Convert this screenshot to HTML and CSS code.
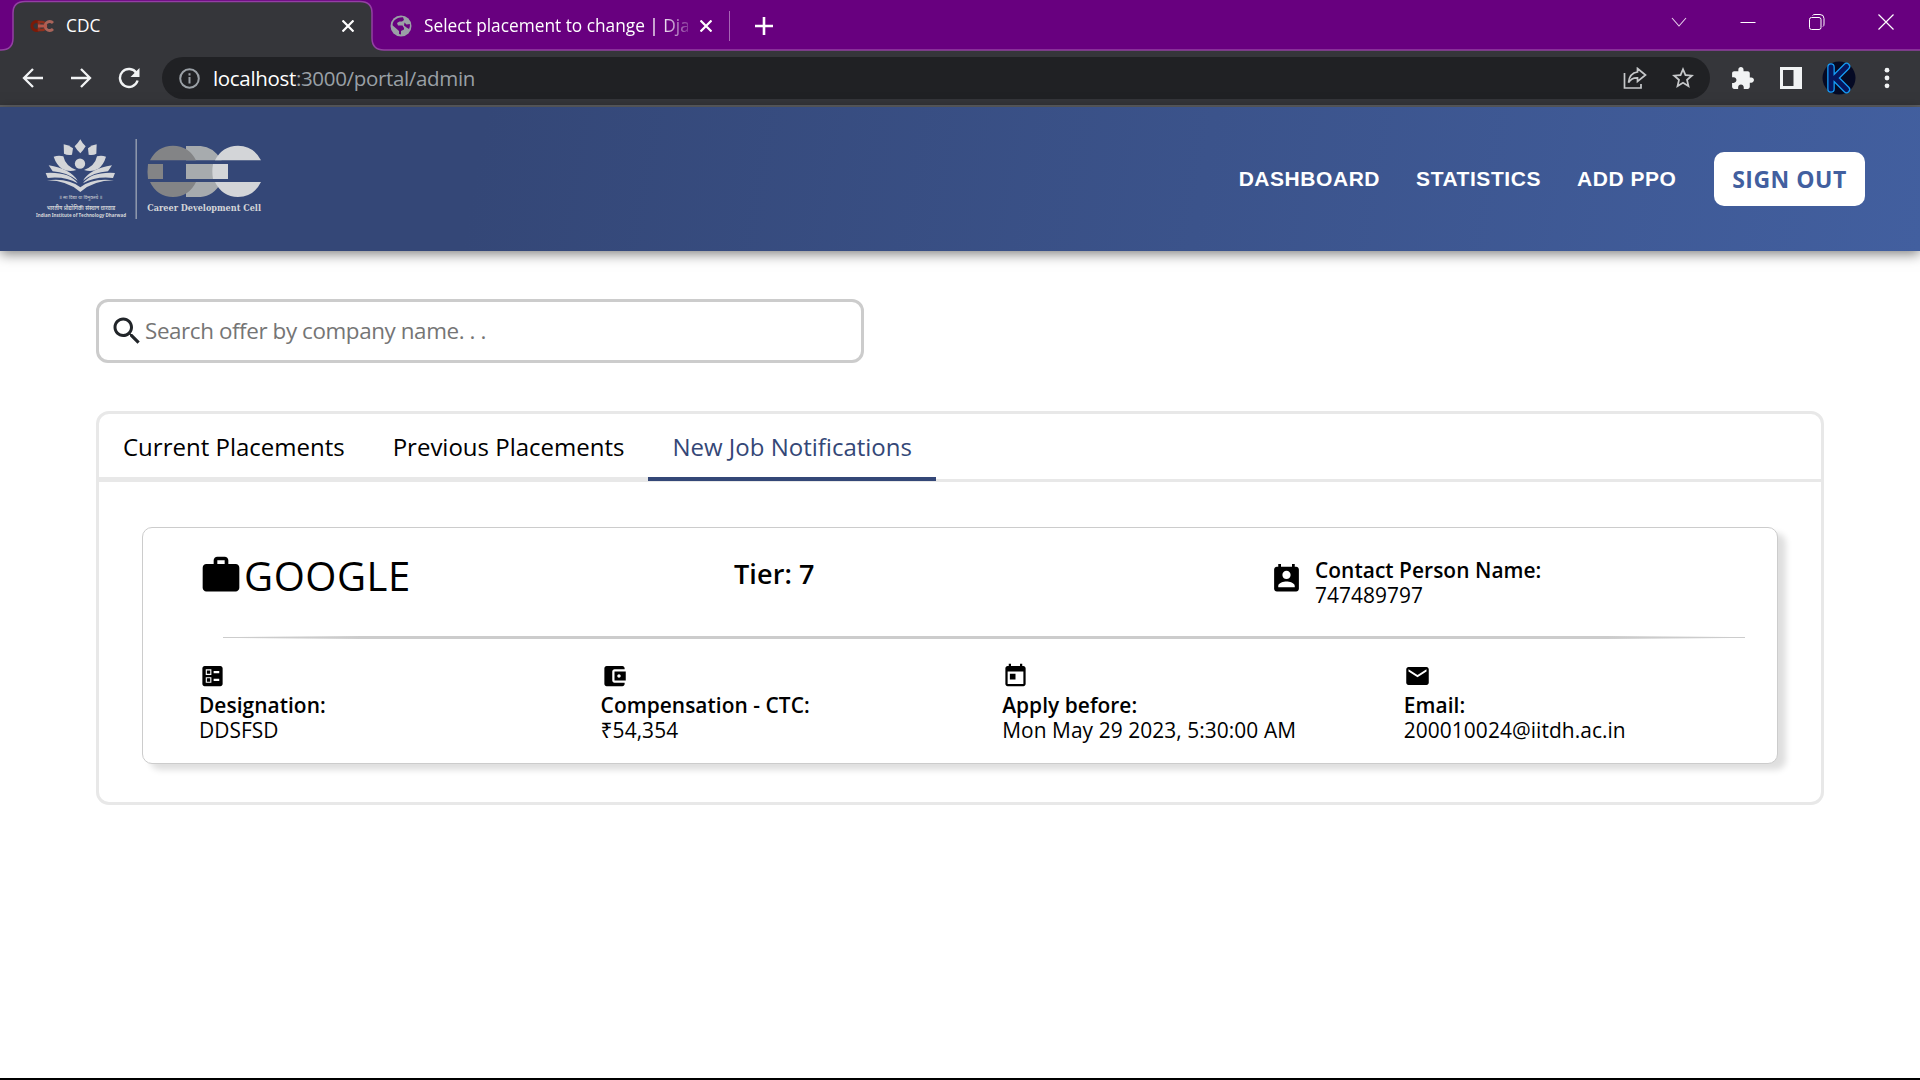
FILE: index.html
```html
<!DOCTYPE html>
<html lang="en">
<head>
<meta charset="utf-8">
<title>CDC</title>
<link rel="stylesheet" href="styles.css">
</head>
<body>
<div class="browser">
  <div class="tabstrip">
    <svg class="tab-shape" width="1920" height="51" viewBox="0 0 1920 51">
      <path d="M0 51V50H1Q13 50 13 38V13Q13 1.500 25 1.500H360Q372 1.500 372 13V38Q372 50 384 50H1920V51Z" fill="#35363a"/>
      <path d="M0 50H1Q13 50 13 38V13Q13 1.500 25 1.500H360Q372 1.500 372 13V38Q372 50 384 50H1920" fill="none" stroke="#9340a3" stroke-width="1.500"/>
    </svg>
    <div class="tab tab-active">
      <svg class="favicon" width="24" height="12" viewBox="0 0 24 12">
        <path d="M9 2.300A4.500 4.500 0 1 0 9 9.700" fill="none" stroke="#7a1a08" stroke-width="3"/>
        <path d="M9 2h3a4 4 0 0 1 0 8H9z" fill="none" stroke="#8f2f1c" stroke-width="2.600"/>
        <path d="M23 3A4.500 4.500 0 1 0 23 9" fill="none" stroke="#a9645a" stroke-width="2.800"/>
        <path d="M8 4.500h9v3H8z" fill="#b5574a"/>
      </svg>
      <span class="tab-title">CDC</span>
      <svg class="x" width="12" height="12" viewBox="0 0 12 12"><path d="M.5 .5l11 11M11.500 .5l-11 11" stroke="#fff" stroke-width="2.200"/></svg>
    </div>
    <div class="tab tab-other">
      <svg width="22" height="22" viewBox="0 0 22 22"><circle cx="11" cy="11" r="10.500" fill="#9aa0a6"/><path d="M13 2.300L14 5l-2 1.500H9.500L7 8l1 2.500h4.500l1.500 2.500v1.500l-3 1.500v3.500l-2-.5v-3l-2.500-2.200-3.800-3.300C2 7 6 2 13 2.300zM14.500 7.500l2 2 3.300-.5c.3 2 0 3.500-.8 5l-2.500-1.500-2.500-2z" fill="#68007f"/></svg>
      <span class="tab-title fade">Select placement to change | Dja</span>
      <svg class="x" width="12" height="12" viewBox="0 0 12 12"><path d="M.5 .5l11 11M11.500 .5l-11 11" stroke="#fff" stroke-width="2.200"/></svg>
    </div>
    <span class="tab-sep"></span>
    <svg class="plus" width="18" height="18" viewBox="0 0 18 18"><path d="M9 0v18M0 9h18" stroke="#fff" stroke-width="2.600"/></svg>
    <div class="window-buttons">
      <svg width="16" height="16" viewBox="0 0 16 16"><path d="M1 4l7 8 7-8" fill="none" stroke="#e6cfea" stroke-width="1.100"/></svg>
      <svg width="16" height="16" viewBox="0 0 16 16"><path d="M.5 8.500h15" stroke="#fff"/></svg>
      <svg width="16" height="16" viewBox="0 0 16 16"><g fill="none" stroke="#fff"><rect x=".5" y="3.500" width="11.500" height="12" rx="2"/><path d="M3.500 1.500Q4 .5 6 .5H11Q15 .5 15 4.500V10Q15 12 14 12.500"/></g></svg>
      <svg width="16" height="16" viewBox="0 0 16 16"><path d="M.5 .5l15 15M15.500 .5l-15 15" stroke="#fff" stroke-width="1.200"/></svg>
    </div>
  </div>

  <div class="toolbar">
    <svg class="nav-icon" width="22" height="22" viewBox="0 0 22 22"><path d="M21 11H2.500M11 2L2 11l9 9" fill="none" stroke="#f1f3f4" stroke-width="2.300"/></svg>
    <svg class="nav-icon" width="22" height="22" viewBox="0 0 22 22"><path d="M1 11h18.500M11 2l9 9-9 9" fill="none" stroke="#f1f3f4" stroke-width="2.300"/></svg>
    <svg class="nav-icon" width="22" height="22" viewBox="0 0 22 22"><path d="M18.500 6A9 9 0 1 0 19.600 13.500" fill="none" stroke="#f1f3f4" stroke-width="2.400"/><path d="M21.500 1v9h-9z" fill="#f1f3f4"/></svg>
    <div class="address">
      <svg width="21" height="21" viewBox="0 0 21 21"><circle cx="10.500" cy="10.500" r="9.300" fill="none" stroke="#9aa0a6" stroke-width="2"/><path d="M10.500 9v6.500M10.500 5.300v2.200" stroke="#9aa0a6" stroke-width="2"/></svg>
      <span class="url"><b>localhost</b>:3000/portal/admin</span>
      <svg class="share" width="24" height="22" viewBox="0 0 24 22"><path d="M1.500 6v15H18v-4M14.500 1.500L22.500 8l-8 6.500V10.800Q8.500 10.500 5.500 15.500 6.500 6 14.500 5z" fill="none" stroke="#c6c8ca" stroke-width="1.700"/></svg>
      <svg width="22" height="22" viewBox="2 2 20 20"><path d="M22 9.240l-7.190-.62L12 2 9.190 8.630 2 9.240l5.460 4.730L5.820 21 12 17.270 18.180 21l-1.630-7.030L22 9.240zM12 15.400l-3.760 2.270 1-4.280-3.320-2.880 4.380-.38L12 6.100l1.710 4.040 4.380.38-3.320 2.880 1 4.280L12 15.400z" fill="#c6c8ca"/></svg>
    </div>
    <svg class="puzzle" width="25" height="25" viewBox="0 0 24 24"><path d="M20.500 11H19V7c0-1.100-.9-2-2-2h-4V3.500C13 2.120 11.880 1 10.500 1S8 2.120 8 3.500V5H4c-1.100 0-1.990.9-1.990 2v3.800H3.500c1.490 0 2.700 1.210 2.700 2.700s-1.210 2.700-2.700 2.700H2V20c0 1.100.9 2 2 2h3.800v-1.500c0-1.490 1.210-2.700 2.700-2.700 1.490 0 2.700 1.210 2.700 2.700V22H17c1.100 0 2-.9 2-2v-4h1.500c1.380 0 2.500-1.120 2.500-2.500S21.880 11 20.500 11z" fill="#f1f3f4"/></svg>
    <svg class="sidepanel" width="22" height="22" viewBox="0 0 22 22"><path d="M0 0h22v22H0zM3 3v16h10.500V3z" fill="#f1f3f4" fill-rule="evenodd"/></svg>
    <svg class="avatar" width="34" height="34" viewBox="0 0 34 34"><circle cx="17" cy="17" r="16.500" fill="#050a24"/><g fill="none" stroke-linecap="round" stroke-linejoin="round"><path d="M9 6v22M24.500 5.500L13 17l11.500 11.500" stroke="#159cf5" stroke-width="7.600"/><path d="M9 6v22M24.500 5.500L13 17l11.500 11.500" stroke="#06165e" stroke-width="5"/></g></svg>
    <svg class="kebab" width="6" height="22" viewBox="0 0 6 22"><g fill="#f1f3f4"><circle cx="3" cy="3.200" r="2.400"/><circle cx="3" cy="11" r="2.400"/><circle cx="3" cy="18.800" r="2.400"/></g></svg>
  </div>
</div>

<header class="header">
  <svg class="logo" width="250" height="100" viewBox="0 27 750 300">
    <g fill="#d3d5d8">
      <path d="M181 58Q172 72 164 79Q171 91 181 100Q190 91 197 79Q188 72 181 58z"/>
      <path d="M131 73Q146 75 159 85L156 104Q143 107 132 101z"/>
      <path d="M230 73Q215 75 204 85L206 104Q220 107 229 101z"/>
      <circle cx="180" cy="131" r="15.500"/>
      <path d="M101 110Q116 105 130 109Q136 138 169 150Q145 157 126 146Q109 134 101 110z"/>
      <path d="M258 110Q244 105 231 109Q225 138 192 150Q216 157 235 146Q251 134 258 110z"/>
      <path d="M86 136Q150 146 173 182Q140 157 98 154Z"/>
      <path d="M276 136Q211 146 189 182Q221 157 264 154Z"/>
      <path d="M77 159Q148 155 173 190Q135 168 83 174Z"/>
      <path d="M285 159Q214 155 189 190Q227 168 279 174Z"/>
      <path d="M81 181Q145 173 181 202Q216 173 282 181Q218 182 181 216Q143 182 81 181z"/>
    </g>
    <g fill="#d3d5d8" font-family="'Noto Sans', 'Noto Sans Devanagari', 'Open Sans', sans-serif">
      <text x="117" y="238" font-size="16" textLength="130" lengthAdjust="spacingAndGlyphs">॥ सा विद्या या विमुक्तये ॥</text>
      <text x="80" y="271" font-size="18" font-weight="600" textLength="206" lengthAdjust="spacingAndGlyphs">भारतीय प्रौद्योगिकी संस्थान धारवाड</text>
      <text x="48" y="292" font-size="13.500" font-weight="700" textLength="270" lengthAdjust="spacingAndGlyphs">Indian Institute of Technology Dharwad</text>
    </g>
    <path d="M348.500 57V297" stroke="#aab0bd" stroke-width="3.500"/>
    <path d="M498 78H542Q580 80 605 121H498zM498 132H580V177H498zM498 186H605Q580 229 542 231H498z" fill="#a7abae"/>
    <path d="M390 121Q411 78 459 77Q507 78 528 121zM384 132H429V177H384Q381 155 384 132zM390 186H528Q507 230 459 231Q411 230 390 186z" fill="#838486"/>
    <path d="M585 121Q606 78 654 77Q702 78 723 121zM579 132H624V177H579Q575 155 579 132zM585 186H723Q702 230 654 231Q606 230 585 186z" fill="#d3d5d8"/>
    <text x="382" y="274" font-family="'DejaVu Serif', serif" font-size="26" font-weight="700" fill="#d3d5d8" textLength="341" lengthAdjust="spacingAndGlyphs">Career Development Cell</text>
  </svg>
  <nav class="nav">
    <a>DASHBOARD</a>
    <a>STATISTICS</a>
    <a>ADD PPO</a>
    <button class="signout">SIGN OUT</button>
  </nav>
</header>

<main class="main">
  <div class="search">
    <svg width="36" height="36" viewBox="0 0 24 24"><path fill="#212529" d="M15.500 14h-.79l-.28-.27C15.410 12.590 16 11.110 16 9.500 16 5.910 13.090 3 9.500 3S3 5.910 3 9.500 5.910 16 9.500 16c1.610 0 3.090-.59 4.230-1.570l.27.28v.79l5 4.990L20.490 19l-4.990-5zm-6 0C7.010 14 5 11.990 5 9.500S7.010 5 9.500 5 14 7.010 14 9.500 11.990 14 9.500 14z"/></svg>
    <span>Search offer by company name. . .</span>
  </div>

  <section class="panel">
    <div class="tabs">
      <div class="tabs-item">Current Placements</div>
      <div class="tabs-item">Previous Placements</div>
      <div class="tabs-item selected">New Job Notifications</div>
    </div>
    <article class="card">
      <div class="card-top">
        <div class="company">
          <svg width="44" height="44" viewBox="0 0 24 24"><path d="M20 6h-4V4c0-1.110-.89-2-2-2h-4c-1.110 0-2 .89-2 2v2H4c-1.110 0-1.990.89-1.990 2L2 19c0 1.110.89 2 2 2h16c1.110 0 2-.89 2-2V8c0-1.110-.89-2-2-2zm-6 0h-4V4h4v2z"/></svg>
          <span>GOOGLE</span>
        </div>
        <div class="tier">Tier: 7</div>
        <div class="contact">
          <svg width="33" height="34" viewBox="0 0 24 24"><path d="M19 3h-1V1h-2v2H8V1H6v2H5c-1.110 0-2 .9-2 2v14c0 1.100.89 2 2 2h14c1.100 0 2-.9 2-2V5c0-1.100-.9-2-2-2zm-7 3c1.660 0 3 1.340 3 3s-1.340 3-3 3-3-1.340-3-3 1.340-3 3-3zm6 12H6v-1c0-2 4-3.100 6-3.100s6 1.100 6 3.100v1z"/></svg>
          <div class="contact-text"><div class="label">Contact Person Name:</div><div class="value">747489797</div></div>
        </div>
      </div>
      <div class="rule"></div>
      <div class="facts">
        <div class="fact">
          <svg width="27" height="28" viewBox="0 0 24 24"><path d="M13 9.500h5v-2h-5v2zm0 7h5v-2h-5v2zm6 4.500H5c-1.100 0-2-.9-2-2V5c0-1.100.9-2 2-2h14c1.100 0 2 .9 2 2v14c0 1.100-.9 2-2 2zM6 11h5V6H6v5zm1-4h3v3H7V7zM6 18h5v-5H6v5zm1-4h3v3H7v-3z"/></svg>
          <div class="label">Designation:</div><div class="value">DDSFSD</div>
        </div>
        <div class="fact">
          <svg width="27" height="28" viewBox="0 0 24 24"><path d="M21 18v1c0 1.100-.9 2-2 2H5c-1.110 0-2-.9-2-2V5c0-1.100.89-2 2-2h14c1.100 0 2 .9 2 2v1h-9c-1.110 0-2 .9-2 2v8c0 1.100.89 2 2 2h9zm-9-2h10V8H12v8zm4-2.500c-.83 0-1.500-.67-1.500-1.500s.67-1.500 1.500-1.500 1.500.67 1.500 1.500-.67 1.500-1.500 1.500z"/></svg>
          <div class="label">Compensation - CTC:</div><div class="value">₹54,354</div>
        </div>
        <div class="fact">
          <svg width="27" height="28" viewBox="0 0 24 24"><path d="M19 3h-1V1h-2v2H8V1H6v2H5c-1.110 0-1.990.9-1.990 2L3 19c0 1.100.89 2 2 2h14c1.100 0 2-.9 2-2V5c0-1.100-.9-2-2-2zm0 16H5V8h14v11zM7 10h5v5H7z"/></svg>
          <div class="label">Apply before:</div><div class="value">Mon May 29 2023, 5:30:00 AM</div>
        </div>
        <div class="fact">
          <svg width="27" height="28" viewBox="0 0 24 24"><path d="M20 4H4c-1.100 0-1.990.9-1.990 2L2 18c0 1.100.9 2 2 2h16c1.100 0 2-.9 2-2V6c0-1.100-.9-2-2-2zm0 4l-8 5-8-5V6l8 5 8-5v2z"/></svg>
          <div class="label">Email:</div><div class="value">200010024@iitdh.ac.in</div>
        </div>
      </div>
    </article>
  </section>
</main>
</body>
</html>
```
FILE: styles.css
```css
* { box-sizing: border-box; }
body {
  margin: 0;
  height: 1080px;
  overflow: hidden;
  display: flex;
  flex-direction: column;
  background: #fff;
  border-bottom: 2px solid #000;
  font-family: "Open Sans", "Noto Sans", sans-serif;
  color: #000;
}
svg { display: block; flex: none; }

/* Browser window */
.tabstrip {
  position: relative;
  display: flex;
  align-items: center;
  height: 51px;
  background: #68007f;
}
.tab-shape { position: absolute; left: 0; top: 0; }
.tab { position: relative; display: flex; align-items: center; height: 51px; color: #fff; }
.tab-active { width: 372px; padding: 0 18px 0 30px; gap: 12px; }
.tab-other { width: 341px; padding-left: 18px; gap: 12px; }
.tab-title { flex: 1; font-size: 17.3px; line-height: 24px; white-space: nowrap; }
.fade {
  flex: none;
  width: 264px;
  -webkit-mask-image: linear-gradient(to right, #000 236px, transparent 272px);
  mask-image: linear-gradient(to right, #000 236px, transparent 272px);
}
.tab-sep { position: relative; width: 1px; height: 30px; margin-left: 16px; background: #a866b5; }
.plus { position: relative; margin-left: 24.500px; }
.window-buttons { position: relative; display: flex; gap: 52.700px; margin-left: auto; margin-right: 26.500px; padding-bottom: 8px; }

.toolbar {
  display: flex;
  align-items: center;
  height: 56px;
  padding: 0 30px 0 22px;
  background: #35363a;
  border-bottom: 2px solid #5f6063;
}
.nav-icon { margin-right: 26px; }
.address {
  display: flex;
  align-items: center;
  width: 1548px;
  height: 42px;
  margin-left: -4px;
  padding: 0 16px 0 17px;
  border-radius: 21px;
  background: #202124;
}
.url { margin-left: 13px; font-size: 20.500px; letter-spacing: -0.33px; line-height: 28px; color: #9aa0a6; }
.url b { font-weight: 400; color: #fff; }
.share { margin-left: auto; margin-right: 25px; }
.puzzle { margin-left: 20px; }
.sidepanel { margin-left: 25px; }
.avatar { margin-left: 20px; }
.kebab { margin-left: 28px; }

/* Page header */
.header {
  position: relative;
  display: flex;
  align-items: center;
  justify-content: space-between;
  height: 144px;
  flex: none;
  padding: 0 55px 0 20px;
  background: linear-gradient(100deg, #344777 25%, #425f9f 100%);
  box-shadow: 0 3px 12px rgba(0, 0, 0, 0.5);
}
.nav { display: flex; align-items: center; gap: 36px; }
.nav a {
  padding-bottom: 1px;
  font: 700 21px "Liberation Sans", Arial, sans-serif;
  letter-spacing: 0.55px;
  color: #fff;
}
.signout {
  width: 151px;
  height: 54px;
  margin-left: 1.500px;
  padding: 0;
  border: 0;
  border-radius: 10px;
  background: #fff;
  color: #425f9f;
  font: 700 23px "Open Sans", sans-serif;
  letter-spacing: 0.5px;
}

/* Content */
.main { padding: 48px 96px 0; }
.search {
  display: flex;
  align-items: center;
  width: 768px;
  height: 64px;
  padding-left: 10px;
  border: 3px solid #ccc;
  border-radius: 12px;
  font-size: 22.400px;
  letter-spacing: -0.4px;
  color: #757575;
}
.search span { padding-bottom: 2px; }
.panel {
  height: 394px;
  margin-top: 48px;
  border: 3px solid #e8e8e8;
  border-radius: 13px;
}
.tabs {
  display: flex;
  height: 68px;
  border-bottom: 3px solid #e8e8e8;
}
.tabs-item {
  height: 67px;
  padding: 15px 24px 0;
  border-bottom: 4px solid #e8e8e8;
  font-size: 24px;
  line-height: 36px;
}
.selected { color: #344777; border-bottom-color: #344777; }
.card {
  width: 1636px;
  height: 237px;
  margin: 45px 0 0 43px;
  padding: 25px 32px 0 56px;
  border: 1px solid #ccc;
  border-radius: 10px;
  background: #fff;
  box-shadow: 8px 6px 6px rgba(0, 0, 0, 0.13);
}
.card-top { display: grid; grid-template-columns: 535px 536px 1fr; height: 83px; }
.company { display: flex; gap: 1px; height: 46px; font-size: 40px; line-height: 46px; letter-spacing: 0.55px; }
.tier { font-size: 27px; line-height: 42px; font-weight: 600; letter-spacing: 0.1px; }
.contact { display: flex; gap: 12px; padding-top: 9px; }
.contact-text { margin-top: -4px; }
.label, .value { font-size: 20.900px; line-height: 25px; }
.label { font-weight: 600; letter-spacing: 0.05px; }
.value { letter-spacing: 0.07px; }
.rule {
  height: 3px;
  margin-left: 24px;
  background:
    linear-gradient(#ccc, #ccc) center / 100% 1px no-repeat,
    linear-gradient(to right, transparent 1%, #ccc 9%, #ccc 91%, transparent 99%);
}
.facts { display: grid; grid-template-columns: repeat(3, 401.600px) 1fr; padding-top: 22.500px; }
.fact .label { margin-top: 3px; }
```
